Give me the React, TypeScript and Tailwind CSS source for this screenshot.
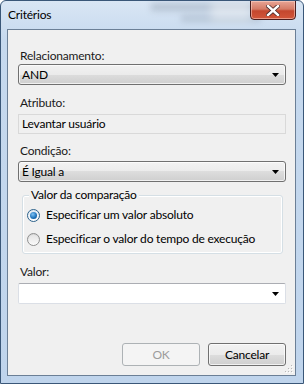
import React from "react";

const font = { fontFamily: 'Lato, "Noto Sans", sans-serif' };

function Arrow() {
  return (
    <svg width="7" height="4" viewBox="0 0 7 4" className="block">
      <path d="M0 0 H7 L3.5 4 Z" fill="#000" />
    </svg>
  );
}

function Combo({ text }: { text: string }) {
  return (
    <div className="h-[21px] w-[268px] rounded-[3px] border border-[#707070] bg-[linear-gradient(#f2f2f2_0%,#ebebeb_50%,#dddddd_50%,#cfcfcf_100%)] flex items-center pl-[3px] pr-[6px] shadow-[inset_0_0_0_1px_rgba(255,255,255,0.7)]">
      <span className="flex-1 text-[12px] leading-[16px] text-black">{text}</span>
      <Arrow />
    </div>
  );
}

function Radio({ checked, label }: { checked: boolean; label: string }) {
  return (
    <div className="flex items-center h-[16px]">
      {checked ? (
        <div className="w-[13px] h-[13px] rounded-full border border-[#2c628b] bg-[linear-gradient(#dfe9f3,#ffffff)] flex items-center justify-center">
          <div className="w-[7px] h-[7px] rounded-full bg-[radial-gradient(circle_at_40%_35%,#7fc2f4,#1a6fb8_60%,#0c4a85)]" />
        </div>
      ) : (
        <div className="w-[13px] h-[13px] rounded-full border border-[#8e8f8f] bg-[linear-gradient(#d6d6d6,#ffffff)] flex items-center justify-center">
          <div className="w-[9px] h-[9px] rounded-full bg-[linear-gradient(#e5e5e5,#f7f7f7)]" />
        </div>
      )}
      <span className="ml-[6px] text-[12px] leading-[16px] text-black">{label}</span>
    </div>
  );
}

export default function App() {
  return (
    <div
      className="relative w-[304px] h-[384px] overflow-hidden rounded-t-[6px] border border-[#3a5778] bg-[linear-gradient(180deg,#d9e6f4_0%,#c6d9ee_10%,#bfd4ec_100%)] tracking-[-0.2px]"
      style={font}
    >
      {/* blurred background behind glass */}
      <div className="absolute left-[150px] top-[2px] w-[110px] h-[8px] bg-[#8a98a8] opacity-40 blur-[3px]" />
      <div className="absolute left-[180px] top-[14px] w-[80px] h-[7px] bg-[#8a98a8] opacity-35 blur-[3px]" />
      <div className="absolute left-[210px] top-[0px] w-[40px] h-[20px] bg-[#ffffff] opacity-40 blur-[4px]" />

      {/* title bar */}
      <div className="relative h-[28px] flex items-center pl-[7px]">
        <span className="text-[12px] leading-[16px] text-black">Critérios</span>
      </div>

      {/* close button */}
      <div className="absolute top-[-1px] right-[7px] w-[46px] h-[20px] rounded-b-[4px] border border-[#4a1d1d] bg-[linear-gradient(180deg,#e8a596_0%,#d57b66_45%,#c4472e_55%,#d2563a_100%)] flex items-center justify-center shadow-[inset_0_0_0_1px_rgba(255,220,210,0.5)]">
        <svg width="14" height="11" viewBox="0 0 14 11">
          <path
            d="M2 1 L12 10 M12 1 L2 10"
            stroke="#4a2a2a"
            strokeWidth="4"
            strokeLinecap="square"
          />
          <path
            d="M2 1 L12 10 M12 1 L2 10"
            stroke="#ffffff"
            strokeWidth="2.4"
            strokeLinecap="square"
          />
        </svg>
      </div>

      {/* client area */}
      <div className="relative ml-[6px] w-[289px] h-[347px] border border-[#6b7f96] bg-[#f0f0f0] flex flex-col pl-[10px]">
        <div className="mt-[18px] pl-[2px] text-[12px] leading-[16px] text-[#1a1a1a]">Relacionamento:</div>
        <div className="mt-0">
          <Combo text="AND" />
        </div>

        <div className="mt-[10px] pl-[2px] text-[12px] leading-[16px] text-[#1a1a1a]">Atributo:</div>
        <div className="mt-[3px] h-[20px] w-[268px] border border-[#d9d9d9] bg-[#f0f0f0] flex items-center pl-[3px] text-[12px] leading-[16px] text-black">
          Levantar usuário
        </div>

        <div className="mt-[9px] pl-[2px] text-[12px] leading-[16px] text-[#1a1a1a]">Condição:</div>
        <div className="mt-[2px]">
          <Combo text="É Igual a" />
        </div>

        {/* group box */}
        <div className="relative mt-[13px] ml-[4px] w-[261px] h-[59px] rounded-[3px] border border-[#d5dfe5] shadow-[inset_0_0_0_1px_#ffffff] flex flex-col pl-[4px] pt-[11px] gap-[8px]">
          <div className="absolute left-[6px] top-[-9px] px-[2px] bg-[#f0f0f0] text-[12px] leading-[16px] text-black">
            Valor da comparação
          </div>
          <Radio checked label="Especificar um valor absoluto" />
          <Radio checked={false} label="Especificar o valor do tempo de execução" />
        </div>

        <div className="mt-[10px] pl-[2px] text-[12px] leading-[16px] text-[#1a1a1a]">Valor:</div>
        <div className="mt-[3px] h-[21px] w-[268px] rounded-[2px] border border-[#dbdfe6] border-t-[#abadb3] bg-white flex items-center justify-end pr-[6px]">
          <Arrow />
        </div>

        <div className="mt-[39px] flex gap-[8px] pl-[104px]">
          <div className="w-[78px] h-[23px] rounded-[3px] border border-[#adb2b5] bg-[#f4f4f4] flex items-center justify-center text-[12px] text-[#9c9c9c]">
            OK
          </div>
          <div className="w-[78px] h-[23px] rounded-[3px] border border-[#707070] bg-[linear-gradient(#f2f2f2_0%,#ebebeb_50%,#dddddd_50%,#cfcfcf_100%)] shadow-[inset_0_0_0_1px_rgba(255,255,255,0.7)] flex items-center justify-center text-[12px] text-black">
            Cancelar
          </div>
        </div>

        {/* size grip */}
        <svg className="absolute right-[2px] bottom-[2px]" width="10" height="10" viewBox="0 0 10 10">
          {[
            [8, 2],
            [5, 5],
            [8, 5],
            [2, 8],
            [5, 8],
            [8, 8],
          ].map(([x, y], i) => (
            <g key={i}>
              <rect x={x} y={y} width="1" height="1" fill="#b8b8b8" />
              <rect x={x + 1} y={y + 1} width="1" height="1" fill="#ffffff" />
            </g>
          ))}
        </svg>
      </div>
    </div>
  );
}
